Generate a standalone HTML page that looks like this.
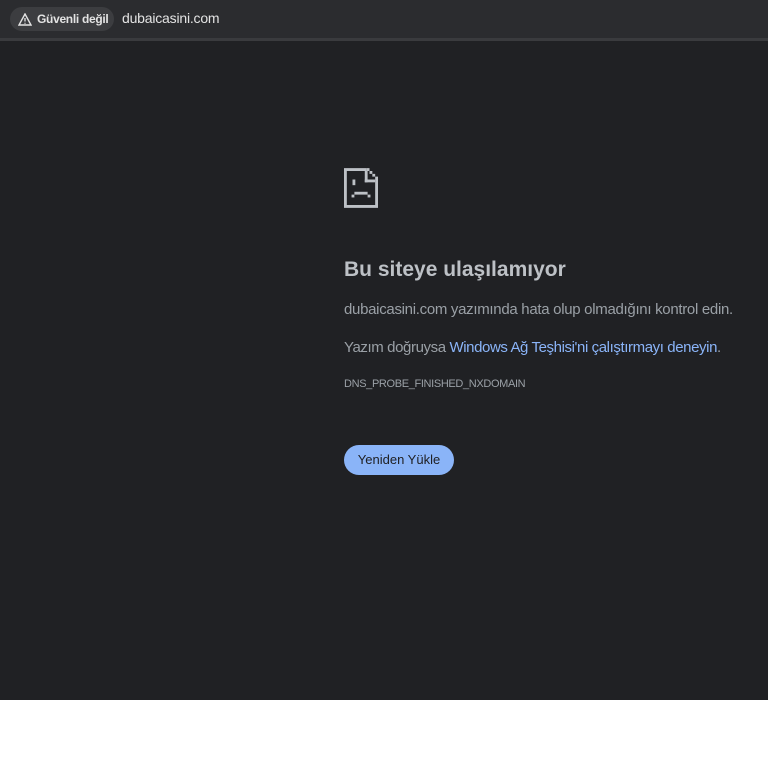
<!DOCTYPE html>
<html><head><meta charset="utf-8"><style>
body{margin:0;width:768px;height:768px;background:#fff;font-family:"Liberation Sans",sans-serif;position:relative;overflow:hidden}
#bar{position:absolute;left:0;top:0;width:768px;height:38px;background:#2b2c2f;border-bottom:3px solid #3a3b3e}
#pill{position:absolute;left:10px;top:7px;height:24px;width:104px;border-radius:12px;background:#3c3d40;color:#e3e3e3;font-size:12px;font-weight:bold;line-height:24px;letter-spacing:-0.3px}
#url{position:absolute;left:122px;top:10px;color:#e3e3e3;font-size:14px;letter-spacing:-0.2px}
#page{position:absolute;left:0;top:41px;width:768px;height:659px;background:#202124;color:#9aa0a6}
.t{position:absolute;left:344px;white-space:nowrap}
h1{margin:0;font-size:21px;color:#bdc1c6;font-weight:bold}
a{color:#8ab4f8;text-decoration:none}
#btn{position:absolute;left:344px;top:404px;width:110px;height:30px;border-radius:15px;background:#8ab4f8;color:#202124;font-size:13px;text-align:center;line-height:30px}
</style></head><body>
<div id="bar">
<div id="pill"><svg width="14" height="13" style="position:absolute;left:8px;top:6px" viewBox="0 0 14 13"><path d="M7 1L13 12H1Z" fill="none" stroke="#e3e3e3" stroke-width="1.4"/><path d="M7 5v3.5M7 9.8v1" stroke="#e3e3e3" stroke-width="1.3"/></svg><span style="position:absolute;left:27px">Güvenli değil</span></div>
<div id="url">dubaicasini.com</div>
</div>
<div id="page">
<svg style="position:absolute;left:344px;top:127px" width="34" height="40" viewBox="0 0 36 42" fill="#bdc1c6">
<path d="M0 0h24v3H3v36h30V12h3v30H0z"/><path d="M24 0h3v3h3v3h3v3h3v3h-3V9h-3V6h-3V3h-3z"/><rect x="22" y="3" width="3" height="12"/><rect x="22" y="12" width="11" height="3"/>
<rect x="9" y="12" width="3" height="6"/><rect x="11" y="25" width="14" height="3"/><rect x="8" y="28" width="3" height="3"/><rect x="25" y="28" width="3" height="3"/>
</svg>
<div class="t" style="top:217px"><h1>Bu siteye ulaşılamıyor</h1></div>
<div class="t" style="top:260px;font-size:15px;letter-spacing:-0.3px">dubaicasini.com yazımında hata olup olmadığını kontrol edin.</div>
<div class="t" style="top:298px;font-size:15px;letter-spacing:-0.4px">Yazım doğruysa <a>Windows Ağ Teşhisi'ni çalıştırmayı deneyin</a>.</div>
<div class="t" style="top:337px;font-size:11px;letter-spacing:-0.35px">DNS_PROBE_FINISHED_NXDOMAIN</div>
<div id="btn">Yeniden Yükle</div>
</div>
</body></html>
